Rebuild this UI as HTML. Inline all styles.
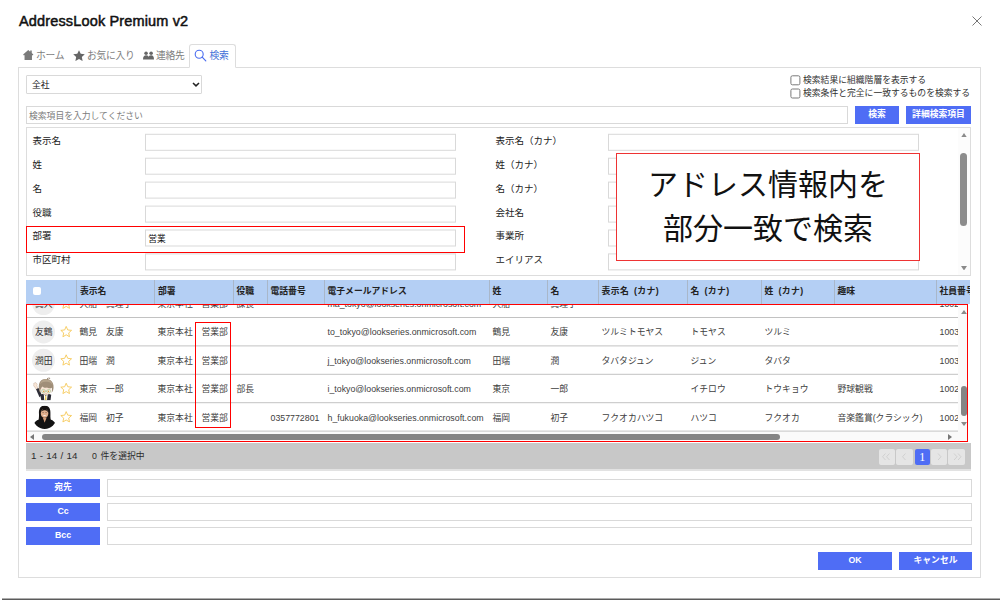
<!DOCTYPE html>
<html lang="ja">
<head>
<meta charset="utf-8">
<title>AddressLook Premium v2</title>
<style>
*{box-sizing:border-box;margin:0;padding:0}
html,body{width:1000px;height:600px;overflow:hidden;background:#fff}
body{font-family:"Liberation Sans","Noto Sans CJK JP",sans-serif;font-size:8.8px;color:#222;position:relative}
.abs{position:absolute}
div,span,svg{position:absolute;white-space:nowrap}
#title{left:19px;top:12.75px;font-size:14.5px;font-weight:normal;color:#111;letter-spacing:0.15px;-webkit-text-stroke:0.5px #111}
#close{left:971.1px;top:14.7px;width:12px;height:12px}
.tab{top:44px;height:24px;line-height:23.2px;font-size:9.8px;color:#7e7e7e;letter-spacing:-0.3px}
#panel{left:18px;top:67px;width:963px;height:511px;border:1px solid #ddd;background:#fff}
#acttab{left:189px;top:44px;width:47px;height:24px;border:1px solid #ddd;border-bottom:1px solid #fff;border-radius:3px 3px 0 0;background:#fff}
.inp{border:1px solid #d9d9d9;background:#fff}
.lbl{font-size:9.5px;color:#222;line-height:12px}
.btn{background:#4f6df5;color:#fff;font-weight:bold;font-size:8.8px;text-align:center;line-height:17px}
.cb{left:0;top:0;width:9.5px;height:9.5px;border:1px solid #7a7a7a;border-radius:2px;background:#fff}
.cbt{font-size:8.8px;line-height:12px;color:#303030}
#form{left:26px;top:127px;width:945px;height:149px;border:1px solid #ddd;background:#fff}
#thead{left:26px;top:280px;width:944.3px;height:24px;background:#b4cff4;overflow:hidden}
.th{top:0;height:24px;line-height:23.8px;font-weight:bold;font-size:8.8px;color:#222}
.sep{top:0;width:1px;height:24px;background:#a9b7c9}
#tbody{left:26px;top:304px;width:932px;height:128px;overflow:hidden;background:#fff}
.row{left:0;width:932px;height:28.4px;border-bottom:1px solid #c2c2c2}
.c{top:0;height:28.4px;line-height:28.4px;font-size:8.8px;color:#404040}
.av{left:6.1px;top:1.8px;width:23.3px;height:23.3px;border-radius:50%;background:#eee;text-align:center;line-height:24.3px;font-size:8.8px;color:#333;overflow:hidden}
.star{left:33.6px;top:6.7px;width:12.4px;height:12.4px}
#foot{left:26px;top:442.6px;width:945px;height:28.8px;background:#c8c8c8;border-bottom:2px solid #e2e2e2}
.pg{top:6.5px;height:15.5px;background:#e5e5e5;border-radius:2px}
#bottomline{left:2px;top:598px;width:998px;height:3px;background:linear-gradient(#6c6c6c,#3c3c3c);transform:translateY(0.45px)}
.red{border:1px solid #f00}
</style>
</head>
<body>
<div id="title">AddressLook Premium v2</div>
<svg id="close" viewBox="0 0 12 12"><path d="M1.5 1.5L10.5 10.5M10.5 1.5L1.5 10.5" stroke="#777" stroke-width="1" fill="none"/></svg>
<div id="panel"></div>
<div id="acttab"></div>
<div class="tab" style="left:23px"><svg style="left:0;top:6px" width="10.5" height="10.3" viewBox="0 0 10 10"><path d="M5 0L0 4.4L0.8 5.3L1.4 4.8V10H8.6V4.8L9.2 5.3L10 4.4L8.4 3V0.6H6.9V1.7Z" fill="#7a7a7a"/></svg><span style="left:13px;top:0">ホーム</span></div>
<div class="tab" style="left:73px"><svg style="left:-0.3px;top:5.6px" width="12" height="11.2" viewBox="0 0 11 10"><path d="M5.5 0L7.1 3.4L10.8 3.8L8.1 6.3L8.8 10L5.5 8.2L2.2 10L2.9 6.3L0.2 3.8L3.9 3.4Z" fill="#666"/></svg><span style="left:14px;top:0">お気に入り</span></div>
<div class="tab" style="left:143px"><svg style="left:-0.3px;top:7.2px" width="11" height="9.2" viewBox="0 0 10 8"><circle cx="2.8" cy="1.8" r="1.6" fill="#666"/><circle cx="7.4" cy="1.8" r="1.6" fill="#666"/><path d="M0 7.6C0 4.8 1.2 3.8 2.8 3.8S5 4.6 5.1 5.4C5.3 4.6 5.8 3.8 7.4 3.8S10 4.8 10 7.6Z" fill="#666"/></svg><span style="left:13px;top:0">連絡先</span></div>
<div class="tab" style="left:194px;color:#3f6fd8"><svg style="left:-0.5px;top:4.8px" width="13" height="13" viewBox="0 0 13 13"><circle cx="5.2" cy="5.2" r="4" fill="none" stroke="#4a6cf0" stroke-width="1.1"/><path d="M8.2 8.2L11.8 11.8" stroke="#4a6cf0" stroke-width="1.2" stroke-linecap="round"/></svg><span style="left:15.5px;top:0">検索</span></div>
<div class="inp" style="left:26px;top:75px;width:176px;height:19px;border-radius:1px"><span style="left:5px;top:3px;font-size:8.8px;line-height:12px;color:#111">全社</span><svg style="left:164.5px;top:6.3px" width="8" height="6" viewBox="0 0 8 6"><path d="M1 1L4 3.9L7 1" fill="none" stroke="#222" stroke-width="1.5"/></svg></div>
<div class="cb" style="transform:translate(790.4px,75.3px)"></div><span class="cbt" style="left:803px;top:74px">検索結果に組織階層を表示する</span>
<div class="cb" style="transform:translate(790.4px,88.5px)"></div><span class="cbt" style="left:803px;top:87px">検索条件と完全に一致するものを検索する</span>
<div class="inp" style="left:26px;top:106px;width:822px;height:18px"><span style="left:2px;top:3px;font-size:8.8px;line-height:12px;color:#7c7c7c">検索項目を入力してください</span></div>
<div class="btn" style="left:855px;top:106px;width:44px;height:18px">検索</div>
<div class="btn" style="left:906px;top:106px;width:65px;height:18px">詳細検索項目</div>
<div id="form">
<span class="lbl" style="left:5.5px;top:6.7px">表示名</span><div class="inp" style="left:118px;top:0;transform:translateY(5.8px);width:311px;height:17px"></div>
<span class="lbl" style="left:468.5px;top:6.7px">表示名（カナ）</span><div class="inp" style="left:581px;top:0;transform:translateY(5.8px);width:311px;height:17px"></div>
<span class="lbl" style="left:5.5px;top:30.6px">姓</span><div class="inp" style="left:118px;top:0;transform:translateY(29.7px);width:311px;height:17px"></div>
<span class="lbl" style="left:468.5px;top:30.6px">姓（カナ）</span><div class="inp" style="left:581px;top:0;transform:translateY(29.7px);width:311px;height:17px"></div>
<span class="lbl" style="left:5.5px;top:54.5px">名</span><div class="inp" style="left:118px;top:0;transform:translateY(53.6px);width:311px;height:17px"></div>
<span class="lbl" style="left:468.5px;top:54.5px">名（カナ）</span><div class="inp" style="left:581px;top:0;transform:translateY(53.6px);width:311px;height:17px"></div>
<span class="lbl" style="left:5.5px;top:78.5px">役職</span><div class="inp" style="left:118px;top:0;transform:translateY(77.6px);width:311px;height:17px"></div>
<span class="lbl" style="left:468.5px;top:78.5px">会社名</span><div class="inp" style="left:581px;top:0;transform:translateY(77.6px);width:311px;height:17px"></div>
<span class="lbl" style="left:5.5px;top:102.4px">部署</span><div class="inp" style="left:118px;top:0;transform:translateY(101.5px);width:311px;height:17px"><span style="left:2.2px;top:2.6px;font-size:8.7px;line-height:11px;color:#111">営業</span></div>
<span class="lbl" style="left:468.5px;top:102.4px">事業所</span><div class="inp" style="left:581px;top:0;transform:translateY(101.5px);width:311px;height:17px"></div>
<span class="lbl" style="left:5.5px;top:126.3px">市区町村</span><div class="inp" style="left:118px;top:0;transform:translateY(125.4px);width:311px;height:17px"></div>
<span class="lbl" style="left:468.5px;top:126.3px">エイリアス</span><div class="inp" style="left:581px;top:0;transform:translateY(125.4px);width:311px;height:17px"></div>
<div style="left:931px;top:0;width:12px;height:147px;background:#fcfcfc"></div>
<svg style="left:934px;top:4.5px" width="6" height="4.5" viewBox="0 0 6 4.5"><path d="M0 4.5L3 0L6 4.5Z" fill="#8a8a8a"/></svg>
<svg style="left:934px;top:137.5px" width="6" height="4.5" viewBox="0 0 6 4.5"><path d="M0 0L3 4.5L6 0Z" fill="#8a8a8a"/></svg>
<div style="left:933px;top:25px;width:7px;height:73px;border-radius:3.5px;background:#8c8c8c"></div>
</div>
<div class="red" style="left:26px;top:226px;width:439px;height:27px"></div>
<div style="left:616px;top:153px;width:304px;height:108px;border:1px solid #e33;background:#fff;text-align:center;font-size:30px;line-height:45px;color:#111;font-family:'Liberation Sans','Noto Sans CJK JP',sans-serif"><span style="left:0;width:302px;top:8px;text-align:center">アドレス情報内を</span><span style="left:0;width:302px;top:52px;text-align:center">部分一致で検索</span></div>
<div id="thead">
<div style="left:7px;top:6.8px;width:8.4px;height:8.4px;background:#fff;border-radius:2px"></div>
<div class="sep" style="left:50px"></div><span class="th" style="left:54px">表示名</span>
<div class="sep" style="left:128px"></div><span class="th" style="left:132px">部署</span>
<div class="sep" style="left:206.5px"></div><span class="th" style="left:210.5px">役職</span>
<div class="sep" style="left:240.5px"></div><span class="th" style="left:244.5px">電話番号</span>
<div class="sep" style="left:297.5px"></div><span class="th" style="left:301.5px">電子メールアドレス</span>
<div class="sep" style="left:462.5px"></div><span class="th" style="left:466.5px">姓</span>
<div class="sep" style="left:520.5px"></div><span class="th" style="left:524.5px">名</span>
<div class="sep" style="left:571.5px"></div><span class="th" style="left:575.5px;word-spacing:2px;letter-spacing:0.4px">表示名 (カナ)</span>
<div class="sep" style="left:660.5px"></div><span class="th" style="left:664.5px;word-spacing:2px;letter-spacing:0.4px">名 (カナ)</span>
<div class="sep" style="left:734.5px"></div><span class="th" style="left:738.5px;word-spacing:2px;letter-spacing:0.4px">姓 (カナ)</span>
<div class="sep" style="left:807.5px"></div><span class="th" style="left:811.5px">趣味</span>
<div class="sep" style="left:909.5px"></div><span class="th" style="left:913.5px">社員番号</span>
</div>
<div id="tbody">
<div class="row" style="top:0;transform:translateY(-14.0px)">
<div class="av">真人</div>
<svg class="star" viewBox="0 0 12 12"><path d="M6 1L7.5 4.4L11.2 4.8L8.4 7.3L9.2 11L6 9.1L2.8 11L3.6 7.3L0.8 4.8L4.5 4.4Z" fill="none" stroke="#f6ca5c" stroke-width="0.9" stroke-linejoin="round"/></svg>
<span class="c" style="left:53.5px">大船　真理子</span>
<span class="c" style="left:131.5px">東京本社</span>
<span class="c" style="left:175.5px">営業部</span>
<span class="c" style="left:210.5px">課長</span>
<span class="c" style="left:301.5px;top:-0.3px">ma_tokyo@lookseries.onmicrosoft.com</span>
<span class="c" style="left:466.5px">大船</span>
<span class="c" style="left:524.5px">真理子</span>
<span class="c" style="left:913.5px;top:-0.3px">1002</span>
</div>
<div class="row" style="top:0;transform:translateY(14.4px)">
<div class="av">友鶴</div>
<svg class="star" viewBox="0 0 12 12"><path d="M6 1L7.5 4.4L11.2 4.8L8.4 7.3L9.2 11L6 9.1L2.8 11L3.6 7.3L0.8 4.8L4.5 4.4Z" fill="none" stroke="#f6ca5c" stroke-width="0.9" stroke-linejoin="round"/></svg>
<span class="c" style="left:53.5px">鶴見　友康</span>
<span class="c" style="left:131.5px">東京本社</span>
<span class="c" style="left:175.5px">営業部</span>
<span class="c" style="left:301.5px;top:-0.3px">to_tokyo@lookseries.onmicrosoft.com</span>
<span class="c" style="left:466.5px">鶴見</span>
<span class="c" style="left:524.5px">友康</span>
<span class="c" style="left:575.5px">ツルミトモヤス</span>
<span class="c" style="left:664.5px">トモヤス</span>
<span class="c" style="left:738.5px">ツルミ</span>
<span class="c" style="left:913.5px;top:-0.3px">1003</span>
</div>
<div class="row" style="top:0;transform:translateY(42.8px)">
<div class="av">潤田</div>
<svg class="star" viewBox="0 0 12 12"><path d="M6 1L7.5 4.4L11.2 4.8L8.4 7.3L9.2 11L6 9.1L2.8 11L3.6 7.3L0.8 4.8L4.5 4.4Z" fill="none" stroke="#f6ca5c" stroke-width="0.9" stroke-linejoin="round"/></svg>
<span class="c" style="left:53.5px">田端　潤</span>
<span class="c" style="left:131.5px">東京本社</span>
<span class="c" style="left:175.5px">営業部</span>
<span class="c" style="left:301.5px;top:-0.3px">j_tokyo@lookseries.onmicrosoft.com</span>
<span class="c" style="left:466.5px">田端</span>
<span class="c" style="left:524.5px">潤</span>
<span class="c" style="left:575.5px">タバタジュン</span>
<span class="c" style="left:664.5px">ジュン</span>
<span class="c" style="left:738.5px">タバタ</span>
<span class="c" style="left:913.5px;top:-0.3px">1003</span>
</div>
<div class="row" style="top:0;transform:translateY(71.2px)">
<svg style="left:6.5px;top:1.6px" width="21.25" height="23.2" viewBox="0 0 170 186"><path d="M6 58C2 50 8 42 14 48C16 40 26 42 26 50C34 50 36 60 30 66L40 92L26 100L14 78C6 76 2 66 6 58Z" fill="#f9e6d6" stroke="#b9a08c" stroke-width="3"/><path d="M24 96L44 86L70 140L52 160Z" fill="#2e2e38"/><path d="M58 140L104 126L146 140L140 186H66Z" fill="#2b2b35"/><path d="M86 134L102 150L118 134L112 186H90Z" fill="#fff"/><path d="M98 146H106L108 186H96Z" fill="#e7c64a"/><ellipse cx="104" cy="102" rx="44" ry="40" fill="#f8e4d4"/><path d="M104 14C60 10 40 50 48 96C50 112 56 122 60 126C56 104 62 84 76 74C84 84 100 88 112 82C120 90 140 90 150 84C154 98 152 114 148 126C158 116 168 96 164 66C160 34 138 14 104 14Z" fill="#a08e78"/><path d="M104 14C80 16 62 30 56 56C70 40 86 34 104 36C126 34 146 44 158 62C152 34 132 16 104 14Z" fill="#b5a48c"/><path d="M112 16C112 4 124 -2 134 4C140 8 138 16 130 14C134 8 126 6 122 10C118 14 120 18 120 20Z" fill="#8f7d68"/><circle cx="84" cy="112" r="14" fill="#f6f3ea" stroke="#6aa85c" stroke-width="3"/><circle cx="126" cy="112" r="14" fill="#f6f3ea" stroke="#6aa85c" stroke-width="3"/><path d="M99 112H111" stroke="#5aa24c" stroke-width="3"/><ellipse cx="86" cy="113" rx="5.5" ry="7" fill="#e5923c"/><ellipse cx="124" cy="113" rx="5.5" ry="7" fill="#e5923c"/><path d="M98 132Q105 138 112 132" stroke="#b86a5a" stroke-width="2.5" fill="none"/></svg>
<svg class="star" viewBox="0 0 12 12"><path d="M6 1L7.5 4.4L11.2 4.8L8.4 7.3L9.2 11L6 9.1L2.8 11L3.6 7.3L0.8 4.8L4.5 4.4Z" fill="none" stroke="#f6ca5c" stroke-width="0.9" stroke-linejoin="round"/></svg>
<span class="c" style="left:53.5px">東京　一郎</span>
<span class="c" style="left:131.5px">東京本社</span>
<span class="c" style="left:175.5px">営業部</span>
<span class="c" style="left:210.5px">部長</span>
<span class="c" style="left:301.5px;top:-0.3px">i_tokyo@lookseries.onmicrosoft.com</span>
<span class="c" style="left:466.5px">東京</span>
<span class="c" style="left:524.5px">一郎</span>
<span class="c" style="left:664.5px">イチロウ</span>
<span class="c" style="left:738.5px">トウキョウ</span>
<span class="c" style="left:811.5px">野球観戦</span>
<span class="c" style="left:913.5px;top:-0.3px">1002</span>
</div>
<div class="row" style="top:0;transform:translateY(99.6px)">
<svg style="left:7.0px;top:2.4px" width="23.4" height="23.4" viewBox="0 0 188 188"><defs><clipPath id="cw"><circle cx="94" cy="94" r="94"/></clipPath></defs><g clip-path="url(#cw)"><rect x="0" y="0" width="188" height="188" fill="#fff"/><path d="M94 0C56 0 46 30 48 66C50 100 44 130 36 150L152 150C144 130 138 100 140 66C142 30 132 0 94 0Z" fill="#161312"/><ellipse cx="93" cy="62" rx="30" ry="35" fill="#e2b08e"/><path d="M64 52C70 30 84 24 96 26C112 26 120 38 122 54C114 42 104 36 94 38C82 36 72 42 64 52Z" fill="#161312"/><path d="M77 74Q93 94 110 74Q94 83 77 74Z" fill="#fff"/><path d="M76 56H86M100 56H110" stroke="#3a2a22" stroke-width="4"/><path d="M78 96L94 140L110 96Z" fill="#d39c78"/><path d="M0 188C0 124 40 110 78 106L94 140L110 106C150 110 188 124 188 188Z" fill="#131313"/></g></svg>
<svg class="star" viewBox="0 0 12 12"><path d="M6 1L7.5 4.4L11.2 4.8L8.4 7.3L9.2 11L6 9.1L2.8 11L3.6 7.3L0.8 4.8L4.5 4.4Z" fill="none" stroke="#f6ca5c" stroke-width="0.9" stroke-linejoin="round"/></svg>
<span class="c" style="left:53.5px">福岡　初子</span>
<span class="c" style="left:131.5px">東京本社</span>
<span class="c" style="left:175.5px">営業部</span>
<span class="c" style="left:244.5px;top:-0.3px">0357772801</span>
<span class="c" style="left:301.5px;top:-0.3px">h_fukuoka@lookseries.onmicrosoft.com</span>
<span class="c" style="left:466.5px">福岡</span>
<span class="c" style="left:524.5px">初子</span>
<span class="c" style="left:575.5px">フクオカハツコ</span>
<span class="c" style="left:664.5px">ハツコ</span>
<span class="c" style="left:738.5px">フクオカ</span>
<span class="c" style="left:811.5px">音楽鑑賞(クラシック)</span>
<span class="c" style="left:913.5px;top:-0.3px">1002</span>
</div>
</div>
<div style="left:958px;top:305px;width:9.5px;height:127px;background:#fafafa"></div>
<svg style="left:960.7px;top:309.8px" width="6" height="4.2" viewBox="0 0 6 4"><path d="M0 4L3 0L6 4Z" fill="#8a8a8a"/></svg>
<svg style="left:960.7px;top:422px" width="6" height="4.2" viewBox="0 0 6 4"><path d="M0 0L3 4L6 0Z" fill="#8a8a8a"/></svg>
<div style="left:960.5px;top:386px;width:6px;height:30px;border-radius:3px;background:#858585"></div>
<div style="left:27px;top:432px;width:940px;height:9px;background:#fafafa"></div>
<svg style="left:30px;top:434px" width="4" height="6" viewBox="0 0 4 6"><path d="M4 0L0 3L4 6Z" fill="#777"/></svg>
<svg style="left:948px;top:434px" width="4" height="6" viewBox="0 0 4 6"><path d="M0 0L4 3L0 6Z" fill="#777"/></svg>
<div style="left:42px;top:433.5px;width:738px;height:6.5px;border-radius:3px;background:#858585"></div>
<div class="red" style="left:26px;top:304px;width:942px;height:138px"></div>
<div class="red" style="left:195px;top:322px;width:36px;height:106px"></div>
<div id="foot"><span style="left:5px;top:7px;font-size:9.8px;line-height:12px;color:#2c2c2c;word-spacing:0.6px">1 - 14 / 14</span><span style="left:66px;top:7px;font-size:8.8px;line-height:12px;color:#2c2c2c;word-spacing:1.2px">0 件を選択中</span>
<div class="pg" style="left:853px;width:16px"><svg style="left:0;top:0" width="16" height="15.5" viewBox="0 0 16 15.5"><path d="M6.5 4.5L3.5 7.75L6.5 11M10.5 4.5L7.5 7.75L10.5 11" fill="none" stroke="#cdcdcd" stroke-width="0.9"/></svg></div>
<div class="pg" style="left:870px;width:17px"><svg style="left:0;top:0" width="17" height="15.5" viewBox="0 0 17 15.5"><path d="M9.5 4.5L6.5 7.75L9.5 11" fill="none" stroke="#cdcdcd" stroke-width="0.9"/></svg></div>
<div class="pg" style="left:905px;width:16px"><svg style="left:0;top:0" width="16" height="15.5" viewBox="0 0 16 15.5"><path d="M7 4.5L10 7.75L7 11" fill="none" stroke="#cdcdcd" stroke-width="0.9"/></svg></div>
<div class="pg" style="left:922px;width:17px"><svg style="left:0;top:0" width="17" height="15.5" viewBox="0 0 17 15.5"><path d="M6 4.5L9 7.75L6 11M10 4.5L13 7.75L10 11" fill="none" stroke="#cdcdcd" stroke-width="0.9"/></svg></div>
<div class="pg" style="left:888.8px;width:15px;top:6px;height:16.5px;background:#4f6df5"><span style="left:0;width:15px;text-align:center;top:0;line-height:16.5px;font-size:12px;color:#fff;font-family:'Liberation Serif',serif">1</span></div>
</div>
<div class="btn" style="left:26px;top:479px;width:74px;height:18px">宛先</div><div class="inp" style="left:107px;top:479px;width:864.5px;height:18px"></div>
<div class="btn" style="left:26px;top:503px;width:74px;height:18px">Cc</div><div class="inp" style="left:107px;top:503px;width:864.5px;height:18px"></div>
<div class="btn" style="left:26px;top:527px;width:74px;height:18px">Bcc</div><div class="inp" style="left:107px;top:527px;width:864.5px;height:18px"></div>
<div class="btn" style="left:818px;top:552px;width:74px;height:18px">OK</div>
<div class="btn" style="left:899px;top:552px;width:73px;height:18px">キャンセル</div>
<div id="bottomline"></div>
</body>
</html>
